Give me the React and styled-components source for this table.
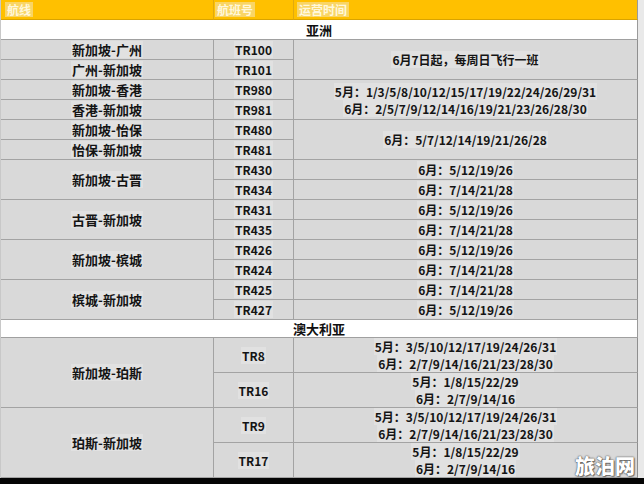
import React from "react";
import styled, { createGlobalStyle } from "styled-components";

const Global = createGlobalStyle`
  html, body { margin: 0; padding: 0; background: #e9e9e9; overflow: hidden; }
  body { font-family: "Noto Sans CJK SC", "Noto Sans", sans-serif; }
`;

const Page = styled.div`
  position: relative;
  width: 644px;
  height: 484px;
  display: grid;
  grid-template-rows: 478px 6px;
`;

const Sheet = styled.div`
  display: grid;
  width: 637px;
  grid-template-columns: 213px 80px 344px;
  grid-template-rows: 20px 20px repeat(14, 20px) 18px 35px 35px 35px 35px;
  border-left: 1px solid #c8c8c8;
  box-sizing: border-box;
`;

const HeadCell = styled.div`
  grid-column: ${(p) => p.$col};
  background: #ffc000;
  border-bottom: 1px solid #d9a300;
  border-right: 1px solid ${(p) => (p.$last ? "#9a9a9a" : "#e0aa10")};
  box-sizing: border-box;
  display: flex;
  align-items: center;
  padding-left: ${(p) => p.$pad}px;
`;

const HeadText = styled.span`
  font-size: 12px;
  font-weight: 700;
  line-height: 15px;
  color: #fff8dc;
  background: #f9d566;
  padding: 0 2px;
`;

const Section = styled.div`
  grid-column: 1 / 4;
  background: #ffffff;
  border-bottom: 1px solid #a0a0a0;
  border-right: 1px solid #9a9a9a;
  box-sizing: border-box;
  display: flex;
  align-items: center;
  justify-content: center;
  font-size: 13px;
  font-weight: 700;
  color: #111;
`;

const Cell = styled.div`
  grid-column: ${(p) => p.$col};
  grid-row: span ${(p) => p.$span || 1};
  background: #d9d9d9;
  border-right: 1px solid ${(p) => (p.$col === 3 ? "#8f8f8f" : "#a3a3a3")};
  border-bottom: 1px solid #a3a3a3;
  box-sizing: border-box;
  display: flex;
  flex-direction: column;
  align-items: center;
  justify-content: center;
  color: #141414;
  font-weight: 700;
  font-size: ${(p) => (p.$col === 1 ? 13 : 12)}px;
  line-height: 17px;
  white-space: nowrap;
`;

const Label = styled.span`
  background: #e1e1e1;
  padding: 0 1px;
`;

const BottomBar = styled.div`
  background: #050505;
`;

const Watermark = styled.div`
  position: absolute;
  right: 9px;
  bottom: 4px;
  font-size: 20px;
  font-weight: 900;
  color: #ffffff;
  text-shadow: 0 0 1px #444, 0 0 2px #666, 1px 1px 1px #777;
  font-family: "Noto Sans CJK SC", sans-serif;
`;

const asia = [
  { route: "新加坡-广州", span: 1 },
  { route: "广州-新加坡", span: 1 },
  { route: "新加坡-香港", span: 1 },
  { route: "香港-新加坡", span: 1 },
  { route: "新加坡-怡保", span: 1 },
  { route: "怡保-新加坡", span: 1 },
  { route: "新加坡-古晋", span: 2 },
  null,
  { route: "古晋-新加坡", span: 2 },
  null,
  { route: "新加坡-槟城", span: 2 },
  null,
  { route: "槟城-新加坡", span: 2 },
  null,
];

const asiaFlights = [
  "TR100", "TR101", "TR980", "TR981", "TR480", "TR481", "TR430",
  "TR434", "TR431", "TR435", "TR426", "TR424", "TR425", "TR427",
];

const asiaTimes = [
  { span: 2, lines: ["6月7日起，每周日飞行一班"] },
  null,
  {
    span: 2,
    lines: [
      "5月：1/3/5/8/10/12/15/17/19/22/24/26/29/31",
      "6月：2/5/7/9/12/14/16/19/21/23/26/28/30",
    ],
  },
  null,
  { span: 2, lines: ["6月：5/7/12/14/19/21/26/28"] },
  null,
  { span: 1, lines: ["6月：5/12/19/26"] },
  { span: 1, lines: ["6月：7/14/21/28"] },
  { span: 1, lines: ["6月：5/12/19/26"] },
  { span: 1, lines: ["6月：7/14/21/28"] },
  { span: 1, lines: ["6月：5/12/19/26"] },
  { span: 1, lines: ["6月：7/14/21/28"] },
  { span: 1, lines: ["6月：7/14/21/28"] },
  { span: 1, lines: ["6月：5/12/19/26"] },
];

const longTimes = [
  "5月：3/5/10/12/17/19/24/26/31",
  "6月：2/7/9/14/16/21/23/28/30",
];
const shortTimes = ["5月：1/8/15/22/29", "6月：2/7/9/14/16"];

const australia = [
  { route: "新加坡-珀斯", flight: "TR8", lines: longTimes },
  { route: null, flight: "TR16", lines: shortTimes },
  { route: "珀斯-新加坡", flight: "TR9", lines: longTimes },
  { route: null, flight: "TR17", lines: shortTimes },
];

function Lines({ lines }) {
  return lines.map((l) => <Label key={l}>{l}</Label>);
}

export default function App() {
  const cells = [];
  asiaFlights.forEach((f, i) => {
    const r = asia[i];
    if (r) {
      cells.push(
        <Cell key={"r" + i} $col={1} $span={r.span}>
          <Label>{r.route}</Label>
        </Cell>
      );
    }
    cells.push(
      <Cell key={"f" + i} $col={2}>
        <Label>{f}</Label>
      </Cell>
    );
    const t = asiaTimes[i];
    if (t) {
      cells.push(
        <Cell key={"t" + i} $col={3} $span={t.span}>
          <Lines lines={t.lines} />
        </Cell>
      );
    }
  });

  const auCells = [];
  australia.forEach((a, i) => {
    if (a.route) {
      auCells.push(
        <Cell key={"ar" + i} $col={1} $span={2}>
          <Label>{a.route}</Label>
        </Cell>
      );
    }
    auCells.push(
      <Cell key={"af" + i} $col={2}>
        <Label>{a.flight}</Label>
      </Cell>
    );
    auCells.push(
      <Cell key={"at" + i} $col={3}>
        <Lines lines={a.lines} />
      </Cell>
    );
  });

  return (
    <>
      <Global />
      <Page>
        <Sheet>
          <HeadCell $col={1} $pad={4}>
            <HeadText>航线</HeadText>
          </HeadCell>
          <HeadCell $col={2} $pad={1}>
            <HeadText>航班号</HeadText>
          </HeadCell>
          <HeadCell $col={3} $pad={3} $last>
            <HeadText>运营时间</HeadText>
          </HeadCell>
          <Section>亚洲</Section>
          {cells}
          <Section>澳大利亚</Section>
          {auCells}
        </Sheet>
        <BottomBar />
        <Watermark>旅泊网</Watermark>
      </Page>
    </>
  );
}
